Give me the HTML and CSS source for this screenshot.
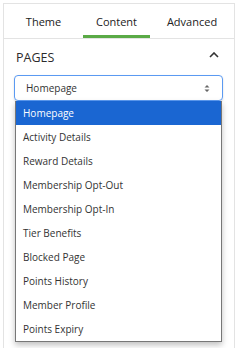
FILE: index.html
```html
<!DOCTYPE html>
<html lang="en">
<head>
    <meta charset="UTF-8">
    <meta name="viewport" content="width=device-width, initial-scale=1.0">
    <title>Page Settings</title>
    <link rel="stylesheet" href="styles.css">
</head>
<body>
    <div class="panel">
        <div class="tabs">
            <div class="tab tab-theme">Theme</div>
            <div class="tab tab-content active">Content</div>
            <div class="tab tab-advanced">Advanced</div>
        </div>
        <div class="section">
            <div class="section-head">
                <span class="section-title">PAGES</span>
                <svg class="chevron" width="10" height="6" viewBox="0 0 10 6">
                    <path d="M1 5 L5 1 L9 5" fill="none" stroke="#333" stroke-width="1.6"/>
                </svg>
            </div>
            <div class="select-box">
                <span>Homepage</span>
                <svg class="updown" width="6" height="9" viewBox="0 0 6 9">
                    <path d="M0.5 3.5 L3 1 L5.5 3.5 Z M0.5 5.5 L3 8 L5.5 5.5 Z" fill="#666"/>
                </svg>
            </div>
            <ul class="options">
                <li class="selected">Homepage</li>
                <li>Activity Details</li>
                <li>Reward Details</li>
                <li>Membership Opt-Out</li>
                <li>Membership Opt-In</li>
                <li>Tier Benefits</li>
                <li>Blocked Page</li>
                <li>Points History</li>
                <li>Member Profile</li>
                <li>Points Expiry</li>
            </ul>
        </div>
    </div>
</body>
</html>
```

FILE: styles.css
```css
body {
    margin: 0;
    font-family: "Open Sans", Arial, sans-serif;
    background-color: #fff;
    color: #333;
}

.panel {
    margin: 3px 6px 0 3px;
    height: 345px;
    border-left: 1px solid #e3e3e3;
    border-top: 1px solid #e3e3e3;
    border-right: 1px solid #e3e3e3;
    box-sizing: border-box;
}

.tabs {
    display: flex;
    height: 34px;
    border-bottom: 1px solid #e3e3e3;
}

.tab {
    font-size: 11px;
    color: #222;
    display: flex;
    align-items: center;
    justify-content: center;
    box-sizing: border-box;
    padding-top: 1px;
}

.tab-theme {
    width: 79px;
}

.tab-content {
    width: 67px;
}

.tab-advanced {
    flex: 1;
}

.tab.active {
    border-bottom: 3px solid #5aaa46;
    padding-top: 4px;
}

.section {
    padding: 0 11px 0 10px;
}

.section-head {
    display: flex;
    justify-content: space-between;
    align-items: center;
    height: 36px;
    padding: 0 4px 0 2px;
}

.section-title {
    font-size: 12.5px;
    color: #2b2b2b;
}

.chevron {
    margin-top: -4px;
}

.select-box {
    height: 26px;
    border: 1px solid #5b9af2;
    border-radius: 4px;
    box-sizing: border-box;
    display: flex;
    align-items: center;
    justify-content: space-between;
    padding: 0 12px 0 11px;
    font-size: 10px;
    color: #333;
    box-shadow: 0 1px 2px rgba(0, 0, 0, 0.15);
}

.options {
    list-style: none;
    margin: 0 1px;
    padding: 0;
    border: 1px solid #777;
    border-top: none;
    background-color: #fff;
    box-shadow: 0 3px 6px rgba(0, 0, 0, 0.25);
}

.options li {
    height: 24px;
    line-height: 24px;
    padding-left: 7px;
    font-size: 10px;
    color: #333;
}

.options li.selected {
    background-color: #1a66d2;
    color: #fff;
}
```
